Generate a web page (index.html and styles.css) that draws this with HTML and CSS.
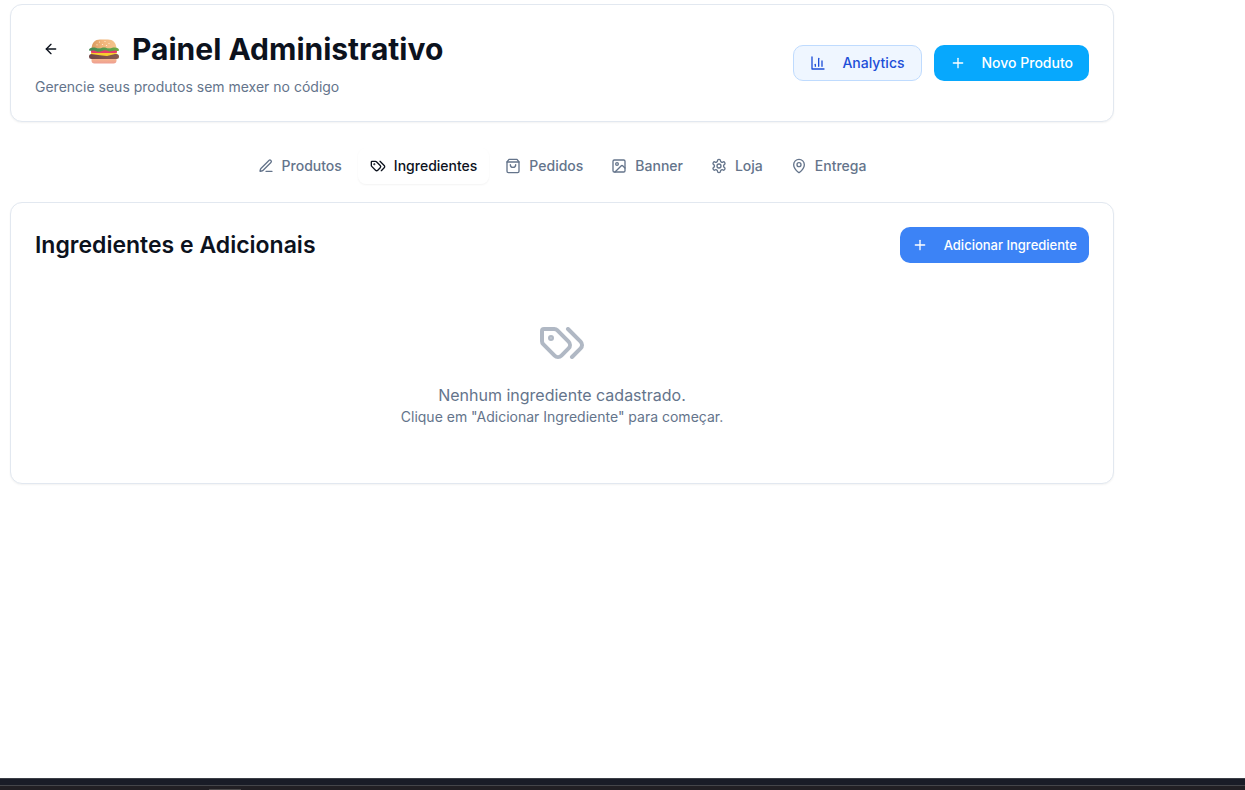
FILE: index.html
```html
<!DOCTYPE html>
<html lang="pt-BR">
<head>
<meta charset="utf-8">
<meta name="viewport" content="width=device-width, initial-scale=1">
<title>Painel Administrativo</title>
<link rel="stylesheet" href="styles.css">
</head>
<body>
<main class="page">
  <header class="card page-header">
    <div class="intro">
      <div class="title-row">
        <button class="back" type="button" aria-label="Voltar">
          <svg class="icon" viewBox="0 0 24 24"><path d="m12 19-7-7 7-7"/><path d="M19 12H5"/></svg>
        </button>
        <svg class="burger" viewBox="0 0 32 28" aria-hidden="true">
          <defs>
            <linearGradient id="bun" x1="0" y1="0" x2="1" y2="0"><stop offset="0" stop-color="#d9995f"/><stop offset=".45" stop-color="#f0b57b"/><stop offset="1" stop-color="#f5c58e"/></linearGradient>
            <linearGradient id="base" x1="0" y1="0" x2="0" y2="1"><stop offset="0" stop-color="#f9c08c"/><stop offset="1" stop-color="#ee9d91"/></linearGradient>
            <linearGradient id="meat" x1="0" y1="0" x2="1" y2="0"><stop offset="0" stop-color="#724646"/><stop offset="1" stop-color="#8b5c50"/></linearGradient>
            <linearGradient id="leaf" x1="0" y1="0" x2="1" y2="0"><stop offset="0" stop-color="#438955"/><stop offset="1" stop-color="#6dac43"/></linearGradient>
          </defs>
          <path fill="url(#base)" d="M3.500 19h25v3.500a3 3 0 0 1-3 3h-19a3 3 0 0 1-3-3z"/>
          <rect x="1" y="16" width="30" height="5" rx="2.500" fill="url(#meat)"/>
          <path fill="#f8ce2d" d="M3 14h26v1.500l-10 2.500-5-.5L3 16z"/>
          <rect x="3" y="11.500" width="26" height="3.500" rx="1.500" fill="#e83c68"/>
          <path fill="url(#bun)" d="M3.500 10.500C4 4.500 7 1.500 12 1.500h8c5 0 8 3 8.500 9z"/>
          <path fill="url(#leaf)" d="M1 12c0-1.500 2-2.500 4-2.500 3 0 4 .8 6 .8s3-.8 5-.8 3 .8 5 .8 3-.8 6-.8c2 0 4 1 4 2.500 0 1-1.500 1.200-3 .7-2-.6-4 .8-6 .8s-3-1.200-5-1.200-3.500 1.500-6 1.500-4-1.800-6-1.300C3 13 1 13 1 12z"/>
          <g fill="#fff1d8"><circle cx="11.500" cy="4" r=".6"/><circle cx="17" cy="3.500" r=".6"/><circle cx="21" cy="5.500" r=".6"/><circle cx="14.500" cy="6.500" r=".6"/><circle cx="9" cy="6.800" r=".6"/><circle cx="18.500" cy="7.500" r=".6"/></g>
        </svg>
        <h1>Painel Administrativo</h1>
      </div>
      <p class="subtitle">Gerencie seus produtos sem mexer no código</p>
    </div>
    <div class="actions">
      <button class="btn btn-outline" type="button">
        <svg class="icon" viewBox="0 0 24 24"><path d="M3 3v18h18"/><path d="M18 17V9"/><path d="M13 17V5"/><path d="M8 17v-3"/></svg>
        Analytics
      </button>
      <button class="btn btn-primary" type="button">
        <svg class="icon" viewBox="0 0 24 24"><path d="M5 12h14"/><path d="M12 5v14"/></svg>
        Novo Produto
      </button>
    </div>
  </header>

  <div class="tabs" role="tablist">
    <button class="tab" type="button" role="tab" aria-selected="false">
      <svg class="icon" viewBox="0 0 24 24"><path d="M12 20h9"/><path d="M16.376 3.622a1 1 0 0 1 3.002 3.002L7.368 18.635a2 2 0 0 1-.855.506l-2.872.838a.5.5 0 0 1-.62-.62l.838-2.872a2 2 0 0 1 .506-.854z"/></svg>
      Produtos
    </button>
    <button class="tab active" type="button" role="tab" aria-selected="true">
      <svg class="icon" viewBox="0 0 24 24"><path d="m15 5 6.300 6.300a2.400 2.400 0 0 1 0 3.400L17 19"/><path d="M9.586 5.586A2 2 0 0 0 8.172 5H3a1 1 0 0 0-1 1v5.172a2 2 0 0 0 .586 1.414L8.290 18.290a2.426 2.426 0 0 0 3.420 0l3.580-3.580a2.426 2.426 0 0 0 0-3.420z"/><circle cx="6.500" cy="9.500" r=".5" fill="currentColor"/></svg>
      Ingredientes
    </button>
    <button class="tab" type="button" role="tab" aria-selected="false">
      <svg class="icon" viewBox="0 0 24 24"><path d="M6 2 3 6v14a2 2 0 0 0 2 2h14a2 2 0 0 0 2-2V6l-3-4Z"/><path d="M3 6h18"/><path d="M16 10a4 4 0 0 1-8 0"/></svg>
      Pedidos
    </button>
    <button class="tab" type="button" role="tab" aria-selected="false">
      <svg class="icon" viewBox="0 0 24 24"><rect x="3" y="3" width="18" height="18" rx="2"/><circle cx="9" cy="9" r="2"/><path d="m21 15-3.086-3.086a2 2 0 0 0-2.828 0L6 21"/></svg>
      Banner
    </button>
    <button class="tab" type="button" role="tab" aria-selected="false">
      <svg class="icon" viewBox="0 0 24 24"><path d="M12.220 2h-.44a2 2 0 0 0-2 2v.18a2 2 0 0 1-1 1.730l-.43.25a2 2 0 0 1-2 0l-.15-.08a2 2 0 0 0-2.730.73l-.22.38a2 2 0 0 0 .73 2.730l.15.1a2 2 0 0 1 1 1.720v.51a2 2 0 0 1-1 1.740l-.15.09a2 2 0 0 0-.73 2.730l.22.38a2 2 0 0 0 2.730.73l.15-.08a2 2 0 0 1 2 0l.43.25a2 2 0 0 1 1 1.730V20a2 2 0 0 0 2 2h.44a2 2 0 0 0 2-2v-.18a2 2 0 0 1 1-1.730l.43-.25a2 2 0 0 1 2 0l.15.08a2 2 0 0 0 2.730-.73l.22-.39a2 2 0 0 0-.73-2.730l-.15-.08a2 2 0 0 1-1-1.740v-.5a2 2 0 0 1 1-1.740l.15-.09a2 2 0 0 0 .73-2.730l-.22-.38a2 2 0 0 0-2.730-.73l-.15.08a2 2 0 0 1-2 0l-.43-.25a2 2 0 0 1-1-1.730V4a2 2 0 0 0-2-2z"/><circle cx="12" cy="12" r="3"/></svg>
      Loja
    </button>
    <button class="tab" type="button" role="tab" aria-selected="false">
      <svg class="icon" viewBox="0 0 24 24"><path d="M20 10c0 4.993-5.539 10.193-7.399 11.799a1 1 0 0 1-1.202 0C9.539 20.193 4 14.993 4 10a8 8 0 0 1 16 0"/><circle cx="12" cy="10" r="3"/></svg>
      Entrega
    </button>
  </div>

  <section class="card">
    <div class="section-head">
      <h2>Ingredientes e Adicionais</h2>
      <button class="btn btn-add" type="button">
        <svg class="icon" viewBox="0 0 24 24"><path d="M5 12h14"/><path d="M12 5v14"/></svg>
        Adicionar Ingrediente
      </button>
    </div>
    <div class="empty">
      <svg class="icon empty-icon" viewBox="0 0 24 24"><path d="m15 5 6.300 6.300a2.400 2.400 0 0 1 0 3.400L17 19"/><path d="M9.586 5.586A2 2 0 0 0 8.172 5H3a1 1 0 0 0-1 1v5.172a2 2 0 0 0 .586 1.414L8.290 18.290a2.426 2.426 0 0 0 3.420 0l3.580-3.580a2.426 2.426 0 0 0 0-3.420z"/><circle cx="6.500" cy="9.500" r=".5" fill="currentColor"/></svg>
      <p class="empty-title">Nenhum ingrediente cadastrado.</p>
      <p class="empty-hint">Clique em "Adicionar Ingrediente" para começar.</p>
    </div>
  </section>
</main>
<footer class="dock"><div class="dock-panel"><span class="dock-handle"></span></div></footer>
</body>
</html>
```

FILE: styles.css
```css
* {
  box-sizing: border-box;
}

body {
  margin: 0;
  min-height: 100vh;
  display: flex;
  flex-direction: column;
  background: #fff;
  color: #0c121d;
  font-family: Inter, "Liberation Sans", sans-serif;
  font-size: 14px;
  line-height: 20px;
}

h1, h2, p {
  margin: 0;
}

button {
  border: 0;
  background: none;
  color: inherit;
  font: inherit;
  cursor: pointer;
}

.page {
  flex: 1;
  padding: 4px 131px 24px 10px;
}

.card {
  padding: 24px;
  border: 1px solid #e2e8f0;
  border-radius: 12px;
  background: #fff;
  box-shadow: 0 1px 2px rgba(0, 0, 0, 0.05);
}

.icon {
  flex: none;
  width: 16px;
  height: 16px;
  fill: none;
  stroke: currentColor;
  stroke-width: 2;
  stroke-linecap: round;
  stroke-linejoin: round;
}

.page-header,
.section-head {
  display: flex;
  align-items: center;
  justify-content: space-between;
  gap: 16px;
}

.title-row {
  display: flex;
  align-items: center;
  height: 40px;
  margin-bottom: 8px;
}

.back {
  display: flex;
  padding: 8px;
  margin-right: 21px;
}

.burger {
  width: 32px;
  height: 28px;
  margin: 6px 12px 0 0;
}

h1 {
  font-size: 30px;
  font-weight: 700;
  line-height: 36px;
}

h2 {
  font-size: 23px;
  font-weight: 600;
  line-height: 32px;
}

.subtitle,
.empty {
  color: #64748b;
}

.actions {
  display: flex;
  gap: 12px;
}

.btn {
  display: flex;
  align-items: center;
  gap: 16px;
  height: 36px;
  padding: 0 16px;
  border-radius: 10px;
  font-weight: 500;
  white-space: nowrap;
}

.btn-outline {
  border: 1px solid #bfdbfe;
  background: #eff6ff;
  color: #1d4ed8;
}

.btn-primary {
  background: #07a8fd;
  color: #fff;
}

.btn-add {
  padding: 0 12px;
  background: #3c83f6;
  color: #fff;
  font-size: 13px;
}

.tabs {
  display: flex;
  justify-content: center;
  gap: 4px;
  padding: 26px 0 18px;
}

.tab {
  display: flex;
  align-items: center;
  gap: 8px;
  height: 36px;
  padding: 0 12px;
  border-radius: 8px;
  color: #64748b;
  font-weight: 500;
}

.tab.active {
  background: #fff;
  color: #0c121d;
  box-shadow: 0 1px 2px rgba(0, 0, 0, 0.05);
}

.empty {
  display: flex;
  flex-direction: column;
  align-items: center;
  padding: 56px 0 32px;
  text-align: center;
}

.empty-icon {
  width: 48px;
  height: 48px;
  margin-bottom: 16px;
  opacity: 0.5;
}

.empty-title {
  font-size: 16px;
  line-height: 24px;
}

.dock {
  height: 12px;
  padding-top: 6px;
  border-top: 1px solid #3b3e46;
  background: #191c27;
}

.dock-panel {
  height: 5px;
  padding: 3px 0 0 209px;
  border-top: 1px solid #44454a;
  background: #211f24;
}

.dock-handle {
  display: block;
  width: 32px;
  height: 1px;
  background: #4c4a4c;
}
```
